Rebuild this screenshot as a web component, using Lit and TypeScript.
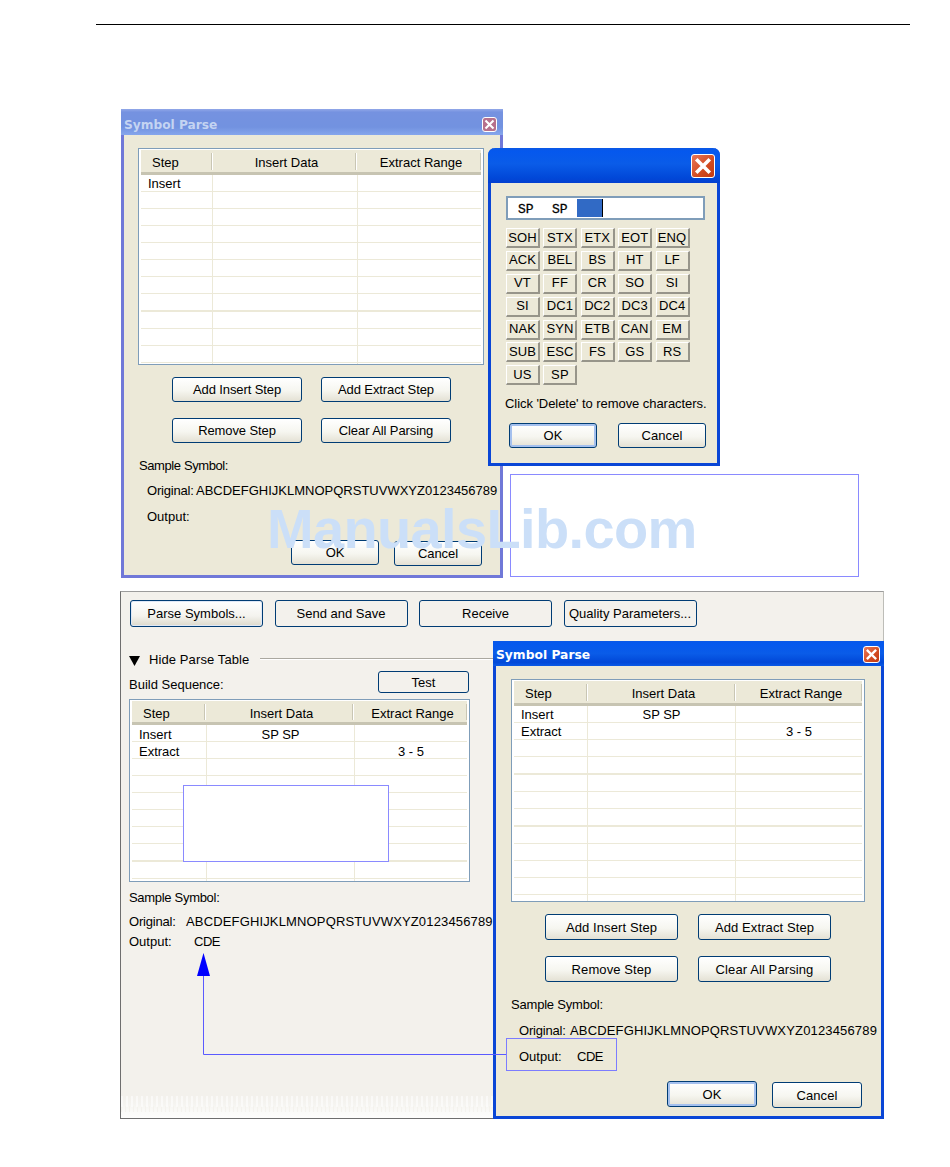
import { LitElement, html, css, svg } from "lit";
import { customElement } from "lit/decorators.js";

type Row = { c: string[]; thick?: boolean };

const emptyRows = (n: number, filled: string[][], thick: number[]): Row[] =>
  Array.from({ length: n }, (_, i) => ({
    c: filled[i] ?? ["", "", ""],
    thick: thick.includes(i),
  }));

const KEYS = [
  "SOH","STX","ETX","EOT","ENQ",
  "ACK","BEL","BS","HT","LF",
  "VT","FF","CR","SO","SI",
  "SI","DC1","DC2","DC3","DC4",
  "NAK","SYN","ETB","CAN","EM",
  "SUB","ESC","FS","GS","RS",
  "US","SP",
];

const closeIcon = svg`<svg class="x" viewBox="0 0 16 16"><path d="M4 4 L12 12 M12 4 L4 12" stroke="#fff" stroke-width="2.6" stroke-linecap="square" fill="none"/></svg>`;

@customElement("app-root")
export class AppRoot extends LitElement {
  static styles = css`
    :host {
      display: block;
      position: relative;
      width: 950px;
      height: 1167px;
      overflow: hidden;
      background: #fff;
      font-family: "Liberation Sans", Arial, sans-serif;
      font-size: 13px;
      line-height: 16px;
      color: #000;
    }
    .rule { height: 1px; background: #000; margin: 24px 40px 0 96px; }

    /* free-floating windows */
    .win {
      position: absolute;
      box-sizing: border-box;
      display: flex;
      flex-direction: column;
      background: #ece9d8;
      border: 3px solid #0a46d6;
      border-top: 0;
    }
    .win-a { left: 121px; top: 109px; width: 382px; height: 469px; border-color: #7078d8; }
    .win-b { left: 488px; top: 148px; width: 232px; height: 318px; border-radius: 7px 7px 0 0; z-index: 2; }
    .win-d { left: 493px; top: 641px; width: 391px; height: 478px; z-index: 2; }

    .title {
      margin: 0 -3px;
      display: flex;
      align-items: center;
      justify-content: space-between;
      box-sizing: border-box;
      flex: none;
      font-family: "DejaVu Sans", Verdana, sans-serif;
      font-weight: 700;
    }
    .title-a {
      height: 26px;
      padding: 5px 6px 0 3px;
      font-size: 12.2px;
      color: #c4d4f2;
      background: linear-gradient(#92a8e8 0, #7592e0 12%, #7292e0 70%, #86a6ec 100%);
    }
    .title-b {
      height: 35px;
      padding: 0 5px 0 0;
      border-radius: 7px 7px 0 0;
      background: linear-gradient(#0a58e6 0, #0558ee 10%, #0a5ce8 45%, #0148d8 85%, #0440d0 100%);
    }
    .title-d {
      height: 25px;
      padding: 2px 4px 0 3px;
      font-size: 12.3px;
      color: #fff;
      background: linear-gradient(#0a58e6 0, #0558ee 10%, #0a5ce8 50%, #0148d8 85%, #0a5ae6 100%);
    }
    .close { display: flex; box-sizing: border-box; border: 1px solid #fff; border-radius: 3px; background: linear-gradient(135deg, #e8775a, #d24a20 60%, #c23a12); }
    .close-a { width: 15px; height: 15px; background: #b7708c; }
    .close-b { width: 24px; height: 24px; }
    .close-d { width: 17px; height: 17px; }
    .x { width: 100%; height: 100%; display: block; }

    /* list table */
    .tbl {
      box-sizing: border-box;
      flex: none;
      border: 1px solid #7f9db9;
      padding: 1px 2px;
      background: #fff;
      overflow: hidden;
    }
    .tbl-a { --c1: 72px; --c2: 145px; --h1: 71px; --h2: 144px; --hp: 3px; --bp: 1px; --hh: 25px; width: 346px; height: 217px; margin: 13px 0 0 14px; }
    .tbl-c { --c1: 75px; --c2: 148px; --h1: 73px; --h2: 148px; --hp: 5px; --bp: 2px; --hh: 24px; width: 341px; height: 183px; margin: 6px 0 0 8px; }
    .tbl-d { --c1: 74px; --c2: 148px; --h1: 73px; --h2: 148px; --hp: 4px; --bp: 1px; --hh: 25px; width: 354px; height: 223px; margin: 13px 0 0 15px; }

    .hdr {
      display: grid;
      grid-template-columns: var(--h1) var(--h2) 1fr;
      box-sizing: border-box;
      height: var(--hh);
      background: #ece9d8;
      border-bottom: 3px solid #c7c4b2;
    }
    .hc { position: relative; display: flex; align-items: center; justify-content: center; padding-left: 5px; padding-top: var(--hp); box-sizing: border-box; }
    .hc:first-child { justify-content: flex-start; padding-left: 11px; }
    .hc::after {
      content: "";
      position: absolute;
      right: 0;
      top: 3px;
      bottom: 2px;
      width: 1px;
      background: #c9c6b4;
      box-shadow: 1px 0 0 #fff;
    }
    .r {
      display: grid;
      grid-template-columns: var(--c1) var(--c2) 1fr;
      height: 17px;
      box-sizing: border-box;
      border-bottom: 1px solid #ece9d8;
    }
    .r.thick { height: 18px; border-bottom-width: 2px; }
    .bc { border-right: 1px solid #ece9d8; display: flex; align-items: center; justify-content: center; padding-top: var(--bp); box-sizing: border-box; }
    .bc:first-child { justify-content: flex-start; padding-left: 7px; }
    .bc:last-child { border-right: 0; }

    /* buttons */
    .btn {
      box-sizing: border-box;
      display: flex;
      align-items: center;
      justify-content: center;
      flex: none;
      padding-top: 1px;
      border: 1px solid #003c74;
      border-radius: 3px;
      background: linear-gradient(#fff, #f6f6f0 55%, #e4e1d4);
      letter-spacing: 0.1px;
    }
    .win-a .btn { letter-spacing: -0.1px; }
    .panel .btn { letter-spacing: 0; }
    .btn.def { border-radius: 3px; box-shadow: inset 0 0 0 2px #a4c0ee; }
    .btn.flat { background: #f3f1ec; }
    .btn.raised { background: linear-gradient(#fff, #f4f3ee 60%, #dcd9cb); box-shadow: inset 0 0 0 1px #dfe8f6; }
    .row { display: flex; }

    .w130 { width: 130px; height: 25px; }
    .w133 { width: 133px; height: 26px; }
    .p-top .w133 { height: 27px; }
    .w88 { width: 88px; height: 25px; }
    .w90 { width: 90px; height: 26px; }

    /* window A flow */
    .a-r1 { margin: 12px 0 0 48px; gap: 19px; }
    .a-r2 { margin: 16px 0 0 48px; gap: 19px; }
    .label { height: 16px; white-space: nowrap; flex: none; }
    .a-s { margin: 15px 0 0 15px; letter-spacing: -0.4px; }
    .a-o { margin: 9px 0 0 23px; }
    .a-u { margin: 10px 0 0 23px; }
    .k-a { display: inline-block; width: 49px; letter-spacing: -0.2px; }
    .a-ok { margin: 15px 0 0 167px; gap: 15px; align-items: flex-start; }
    .low { margin-top: 1px; }

    /* window B flow */
    .input {
      box-sizing: border-box;
      width: 199px;
      height: 24px;
      margin: 13px 0 0 15px;
      border: 2px solid #7f9db9;
      background: #fff;
      display: flex;
      align-items: center;
      padding: 3px 0 0 10px;
      font-family: "Liberation Mono", monospace;
      font-size: 13px;
      flex: none;
      -webkit-text-stroke: 0.3px #000;
    }
    .input span { width: 34px; }
    .input span.sel { width: 26px; height: 18px; box-sizing: border-box; background: #316ac5; border-right: 1px solid #000; margin: -3px 0 0 -9px; }
    .keys {
      display: grid;
      grid-template-columns: repeat(5, 34px);
      grid-auto-rows: 20px;
      column-gap: 3.4px;
      row-gap: 2.9px;
      margin: 8px 0 0 15px;
      flex: none;
    }
    .key {
      box-sizing: border-box;
      display: flex;
      align-items: center;
      justify-content: center;
      background: #ece9d8;
      border-top: 1px solid #fff;
      border-left: 1px solid #fff;
      border-right: 2px solid #97958a;
      border-bottom: 2px solid #97958a;
      letter-spacing: 0.1px;
    }
    .b-h { margin: 11px 0 0 14px; letter-spacing: -0.06px; }
    .b-ok { margin: 11px 0 0 18px; gap: 21px; }

    /* main panel */
    .panel {
      position: absolute;
      left: 120px;
      top: 591px;
      width: 764px;
      height: 528px;
      box-sizing: border-box;
      display: flex;
      flex-direction: column;
      background: #f3f1ec;
      border: 1px solid #6e6e6e;
      border-top-color: #9c9c9c;
      border-right-color: #bdbdb8;
      overflow: hidden;
    }
    .p-top { margin: 8px 0 0 9px; gap: 11.5px; }
    .p-hide { margin: 25px 0 0 8px; align-items: center; height: 16px; }
    .p-hide .label { letter-spacing: 0.1px; }
    .tri { width: 11px; height: 11px; flex: none; margin-right: 9px; }
    .p-line { flex: 1; height: 1px; margin-left: 11px; align-self: flex-start; margin-top: 6px; background: #aaa8a0; box-shadow: 0 1px 0 #fff; }
    .p-build { margin: 3px 0 0 8px; width: 340px; justify-content: space-between; }
    .p-build .label { margin-top: 6px; }
    .test { width: 91px; height: 22px; }
    .p-s { margin: 8px 0 0 8px; letter-spacing: -0.3px; }
    .p-o { margin: 8px 0 0 8px; letter-spacing: 0.15px; }
    .p-u { margin: 4px 0 0 8px; }
    .k-o { display: inline-block; width: 57px; letter-spacing: -0.2px; }
    .k-u { display: inline-block; width: 65px; }
    .cde { letter-spacing: -0.5px; }
    .dither {
      margin-top: auto;
      flex: none;
      height: 22px;
      background:
        repeating-linear-gradient(90deg, rgba(255,255,255,.55) 0 2px, transparent 2px 5px) 0 0 / 100% 11px no-repeat,
        repeating-linear-gradient(90deg, rgba(243,241,236,.8) 0 1px, transparent 1px 4px) 0 10px / 100% 6px no-repeat,
        linear-gradient(#f3f1ec 0, #f5f4f0 35%, #fbfbf9 75%, #fdfdfc 100%);
    }

    /* window D flow */
    .d-r1 { margin: 12px 0 0 49px; gap: 20px; }
    .d-r2 { margin: 16px 0 0 49px; gap: 20px; }
    .d-s { margin: 15px 0 0 15px; letter-spacing: -0.2px; }
    .d-o { margin: 10px 0 0 23px; letter-spacing: 0.16px; }
    .d-u { margin: 10px 0 0 23px; }
    .d-l { display: inline-block; width: 51px; letter-spacing: -0.2px; }
    .d-k { display: inline-block; width: 58px; }
    .d-ok { margin: 16px 0 0 171px; gap: 15px; align-items: flex-start; }

    /* page-level annotations lying over the windows */
    .mask { position: absolute; box-sizing: border-box; background: #fff; border: 1px solid #8a8aff; }
    .mask-1 { left: 510px; top: 474px; width: 349px; height: 103px; }
    .mask-2 { left: 183px; top: 785px; width: 206px; height: 77px; z-index: 1; }
    .note { position: absolute; left: 506px; top: 1038px; width: 111px; height: 33px; box-sizing: border-box; border: 1px solid #7c7cff; z-index: 3; }
    .arrow { position: absolute; left: 0; top: 0; width: 950px; height: 1167px; z-index: 3; pointer-events: none; }
    .wm {
      position: absolute;
      left: 267px;
      top: 497px;
      font-family: "Liberation Sans", Arial, sans-serif;
      font-weight: 700;
      font-size: 56px;
      line-height: 64px;
      letter-spacing: -0.65px;
      color: #cbdff8;
      white-space: nowrap;
      z-index: 4;
    }
  `;

  private table(cls: string, rows: Row[]) {
    return html`<div class="tbl ${cls}">
      <div class="hdr">
        <div class="hc">Step</div>
        <div class="hc">Insert Data</div>
        <div class="hc">Extract Range</div>
      </div>
      ${rows.map(
        (r) => html`<div class="r ${r.thick ? "thick" : ""}">
          ${r.c.map((t) => html`<div class="bc">${t}</div>`)}
        </div>`
      )}
    </div>`;
  }

  render() {
    const alpha = "ABCDEFGHIJKLMNOPQRSTUVWXYZ0123456789";
    return html`
      <div class="rule"></div>

      <div class="win win-a">
        <div class="title title-a"><span>Symbol Parse</span><span class="close close-a">${closeIcon}</span></div>
        ${this.table("tbl-a", emptyRows(12, [["Insert", "", ""]], [7]))}
        <div class="row a-r1"><div class="btn w130">Add Insert Step</div><div class="btn w130">Add Extract Step</div></div>
        <div class="row a-r2"><div class="btn w130">Remove Step</div><div class="btn w130">Clear All Parsing</div></div>
        <div class="label a-s">Sample Symbol:</div>
        <div class="label a-o"><span class="k-a">Original:</span>${alpha}</div>
        <div class="label a-u">Output:</div>
        <div class="row a-ok"><div class="btn w88">OK</div><div class="btn w88 low">Cancel</div></div>
      </div>

      <div class="win win-b">
        <div class="title title-b"><span></span><span class="close close-b">${closeIcon}</span></div>
        <div class="input"><span>SP</span><span>SP</span><span class="sel"></span></div>
        <div class="keys">${KEYS.map((k) => html`<div class="key">${k}</div>`)}</div>
        <div class="label b-h">Click 'Delete' to remove characters.</div>
        <div class="row b-ok"><div class="btn w88 def">OK</div><div class="btn w88">Cancel</div></div>
      </div>

      <div class="mask mask-1"></div>

      <div class="panel">
        <div class="row p-top">
          <div class="btn w133 raised">Parse Symbols...</div>
          <div class="btn w133 flat">Send and Save</div>
          <div class="btn w133 flat">Receive</div>
          <div class="btn w133 flat">Quality Parameters...</div>
        </div>
        <div class="row p-hide">
          <svg class="tri" viewBox="0 0 11 11"><path d="M0 1 H11 L5.5 11 Z" fill="#000"/></svg>
          <span class="label">Hide Parse Table</span>
          <div class="p-line"></div>
        </div>
        <div class="row p-build">
          <span class="label">Build Sequence:</span>
          <div class="btn test flat">Test</div>
        </div>
        ${this.table("tbl-c", emptyRows(10, [["Insert", "SP SP", ""], ["Extract", "", "3 - 5"]], [7]))}
        <div class="label p-s">Sample Symbol:</div>
        <div class="label p-o"><span class="k-o">Original:</span>${alpha}</div>
        <div class="label p-u"><span class="k-u">Output:</span><span class="cde">CDE</span></div>
        <div class="dither"></div>
      </div>

      <div class="mask mask-2"></div>

      <div class="win win-d">
        <div class="title title-d"><span>Symbol Parse</span><span class="close close-d">${closeIcon}</span></div>
        ${this.table("tbl-d", emptyRows(12, [["Insert", "SP SP", ""], ["Extract", "", "3 - 5"]], [3, 6]))}
        <div class="row d-r1"><div class="btn w133">Add Insert Step</div><div class="btn w133">Add Extract Step</div></div>
        <div class="row d-r2"><div class="btn w133">Remove Step</div><div class="btn w133">Clear All Parsing</div></div>
        <div class="label d-s">Sample Symbol:</div>
        <div class="label d-o"><span class="d-l">Original:</span>${alpha}</div>
        <div class="label d-u"><span class="d-k">Output:</span><span class="cde">CDE</span></div>
        <div class="row d-ok"><div class="btn w90 def">OK</div><div class="btn w90 low">Cancel</div></div>
      </div>

      <div class="note"></div>
      <svg class="arrow" viewBox="0 0 950 1167">
        <path d="M203.5 976 V1054.5 H506" fill="none" stroke="#5a5aff" stroke-width="1"/>
        <path d="M203.5 953 L210 976 H197 Z" fill="#0000ff"/>
      </svg>

      <div class="wm">ManualsLib.com</div>
    `;
  }
}
